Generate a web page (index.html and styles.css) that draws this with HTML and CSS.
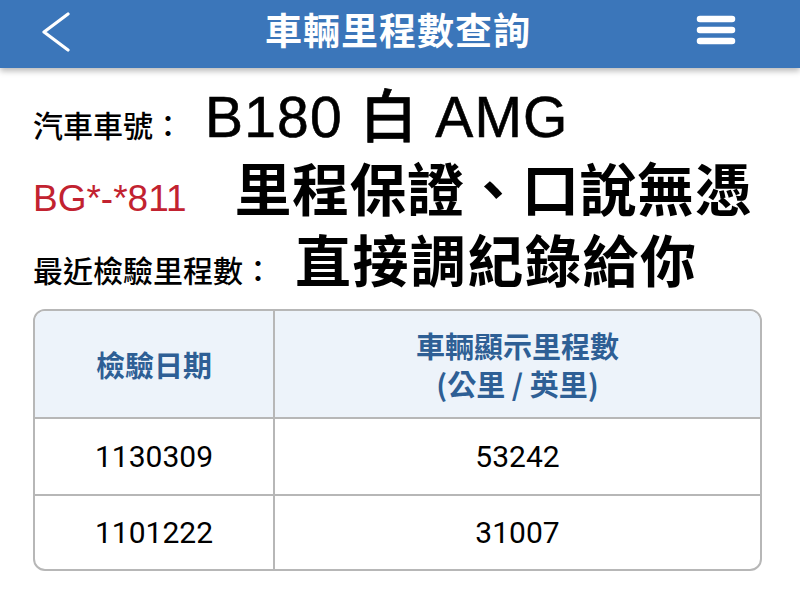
FILE: index.html
```html
<!DOCTYPE html>
<html lang="zh-Hant">
<head>
<meta charset="utf-8">
<title>車輛里程數查詢</title>
<link rel="stylesheet" href="styles.css">
</head>
<body>
<header class="topbar">
  <svg class="back" width="32" height="40" viewBox="0 0 32 40"><polyline points="28,2 4,20 28,38" fill="none" stroke="#fff" stroke-width="3.2" stroke-linecap="round" stroke-linejoin="round"/></svg>
  <h1 class="title">車輛里程數查詢</h1>
  <svg class="menu" width="40" height="30" viewBox="0 0 40 30"><g stroke="#fff" stroke-width="6.5" stroke-linecap="round"><line x1="4" y1="4" x2="36" y2="4"/><line x1="4" y1="15" x2="36" y2="15"/><line x1="4" y1="26" x2="36" y2="26"/></g></svg>
</header>
<main class="content">
  <div class="row row-1">
    <span class="label">汽車車號：</span>
    <span class="car">B180 白 AMG</span>
  </div>
  <div class="row row-2">
    <span class="plate">BG*-*811</span>
    <span class="big">里程保證、口說無憑</span>
  </div>
  <div class="row row-3">
    <span class="label">最近檢驗里程數：</span>
    <span class="big">直接調紀錄給你</span>
  </div>
  <div class="table-wrap">
    <table class="records">
      <thead>
        <tr><th class="c1">檢驗日期</th><th class="c2">車輛顯示里程數<br>(公里 / 英里)</th></tr>
      </thead>
      <tbody>
        <tr class="r1"><td>1130309</td><td>53242</td></tr>
        <tr class="r2"><td>1101222</td><td>31007</td></tr>
      </tbody>
    </table>
  </div>
</main>
</body>
</html>
```
FILE: styles.css
```css
* { box-sizing: border-box; }
html, body { margin: 0; padding: 0; background: #fff; }
body {
  width: 800px;
  height: 600px;
  overflow: hidden;
  font-family: "Noto Sans CJK TC", "Noto Sans", sans-serif;
  color: #000;
}
.topbar {
  height: 68px;
  background: #3b76ba;
  box-shadow: 0 3px 6px rgba(0,0,0,0.28);
  display: flex;
  align-items: center;
  justify-content: space-between;
  padding: 0 64px 0 40px;
  position: relative;
}
.back { display: block; margin-top: -4px; }
.menu { display: block; margin-top: -8px; }
.title {
  margin: 0;
  color: #fff;
  font-size: 37px;
  font-weight: 700;
  line-height: 1;
  letter-spacing: 1px;
  margin-top: -10px;
  margin-left: 28px;
}
.content { padding: 14px 38px 0 33px; }
.row { display: flex; align-items: baseline; }
.row-1 { height: 70px; gap: 22px; }
.row-2 { height: 72px; gap: 48px; padding-top: 4px; }
.row-3 { height: 72px; gap: 22px; padding-top: 4px; }
.label { font-size: 30px; font-weight: 500; line-height: 60px; }
.row-1 .label { line-height: 70px; }
.car {
  font-family: "Liberation Sans", "Noto Sans CJK TC", sans-serif;
  font-size: 57px;
  font-weight: 500;
  line-height: 70px;
  letter-spacing: 1.2px;
  -webkit-text-stroke: 0.6px #000;
}
.plate {
  font-family: "Liberation Sans", sans-serif;
  font-size: 37px;
  color: #c22230;
  line-height: 60px;
}
.big { font-size: 57px; font-weight: 700; line-height: 60px; letter-spacing: 0.5px; }
.row-3 .big { font-size: 56px; letter-spacing: 1.5px; }
.table-wrap {
  margin-top: 13px;
  border: 2px solid #b7b7b7;
  border-radius: 12px;
  overflow: hidden;
  width: 729px;
}
.records { width: 100%; border-collapse: collapse; }
.records th {
  background: #edf3fa;
  color: #2e5f95;
  font-size: 29px;
  font-weight: 700;
  line-height: 38px;
  height: 107px;
  text-align: center;
  padding: 0;
}
.records .c1 { width: 239px; border-right: 2px solid #b7b7b7; }
.records td {
  font-family: Roboto, "Liberation Sans", sans-serif;
  font-size: 30px;
  text-align: center;
  padding: 0;
  border-top: 2px solid #b7b7b7;
}
.records td:first-child { border-right: 2px solid #b7b7b7; }
.records .r1 td { height: 77px; }
.records .r2 td { height: 74px; }
```
